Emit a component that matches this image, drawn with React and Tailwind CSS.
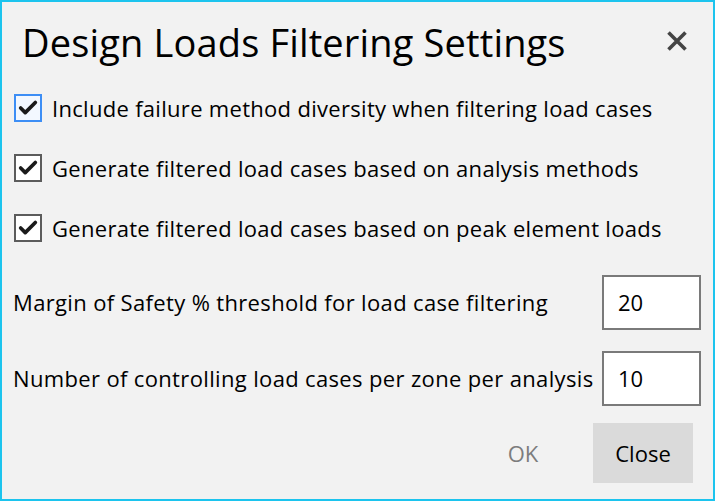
import { Check } from 'lucide-react';

const font = { fontFamily: '"Open Sans", "Noto Sans", sans-serif' };

function CheckRow({ label, focused }) {
    return (
        <label className="flex items-center h-[28px] gap-[10px]">
            <span
                className={
                    'w-[28px] h-[28px] flex items-center justify-center border-2 ' +
                    (focused ? 'border-[#3d8ef5] bg-[#f3f8ff]' : 'border-[#5c5c5c] bg-white')
                }
            >
                <Check className="w-[22px] h-[22px] text-[#1a1a1a]" strokeWidth={4} />
            </span>
            <span className="text-[22px] text-black tracking-[0.3px]">{label}</span>
        </label>
    );
}

function NumberRow({ label, value }) {
    return (
        <div className="flex items-center justify-between h-[55px]">
            <span className="text-[22px] text-black tracking-[0.35px] whitespace-nowrap">{label}</span>
            <div className="w-[99px] h-[55px] shrink-0 border-2 border-[#7a7a7a] bg-white flex items-center px-[14px] text-[22px] text-black">
                {value}
            </div>
        </div>
    );
}

export default function App() {
    return (
        <div
            className="w-[715px] h-[501px] bg-[#f2f2f2] border-2 border-[#1cc4ee] flex flex-col"
            style={font}
        >
            <div className="flex items-center justify-between pl-[20px] pr-[25px] h-[82px]">
                <h1 className="text-[38px] text-black tracking-[0.15px] leading-none mt-[-2px]">Design Loads Filtering Settings</h1>
                <svg width="22" height="22" viewBox="0 0 22 22" className="mt-[-4px]">
                    <path d="M2.5 2.5 L19.5 19.5 M19.5 2.5 L2.5 19.5" stroke="#444" strokeWidth="3.6" />
                </svg>
            </div>
            <div className="flex flex-col gap-[32px] pl-[12px] mt-[10px]">
                <CheckRow focused label="Include failure method diversity when filtering load cases" />
                <CheckRow label="Generate filtered load cases based on analysis methods" />
                <CheckRow label="Generate filtered load cases based on peak element loads" />
            </div>
            <div className="flex flex-col gap-[21px] pl-[11px] pr-[12px] mt-[33px]">
                <NumberRow label="Margin of Safety % threshold for load case filtering" value="20" />
                <NumberRow label="Number of controlling load cases per zone per analysis" value="10" />
            </div>
            <div className="flex items-center justify-end gap-[35px] pr-[20px] mt-[17px]">
                <button className="w-[70px] h-[60px] text-[22px] text-[#7d7d7d]">OK</button>
                <button className="w-[100px] h-[60px] bg-[#dadada] text-[22px] text-black">Close</button>
            </div>
        </div>
    );
}
